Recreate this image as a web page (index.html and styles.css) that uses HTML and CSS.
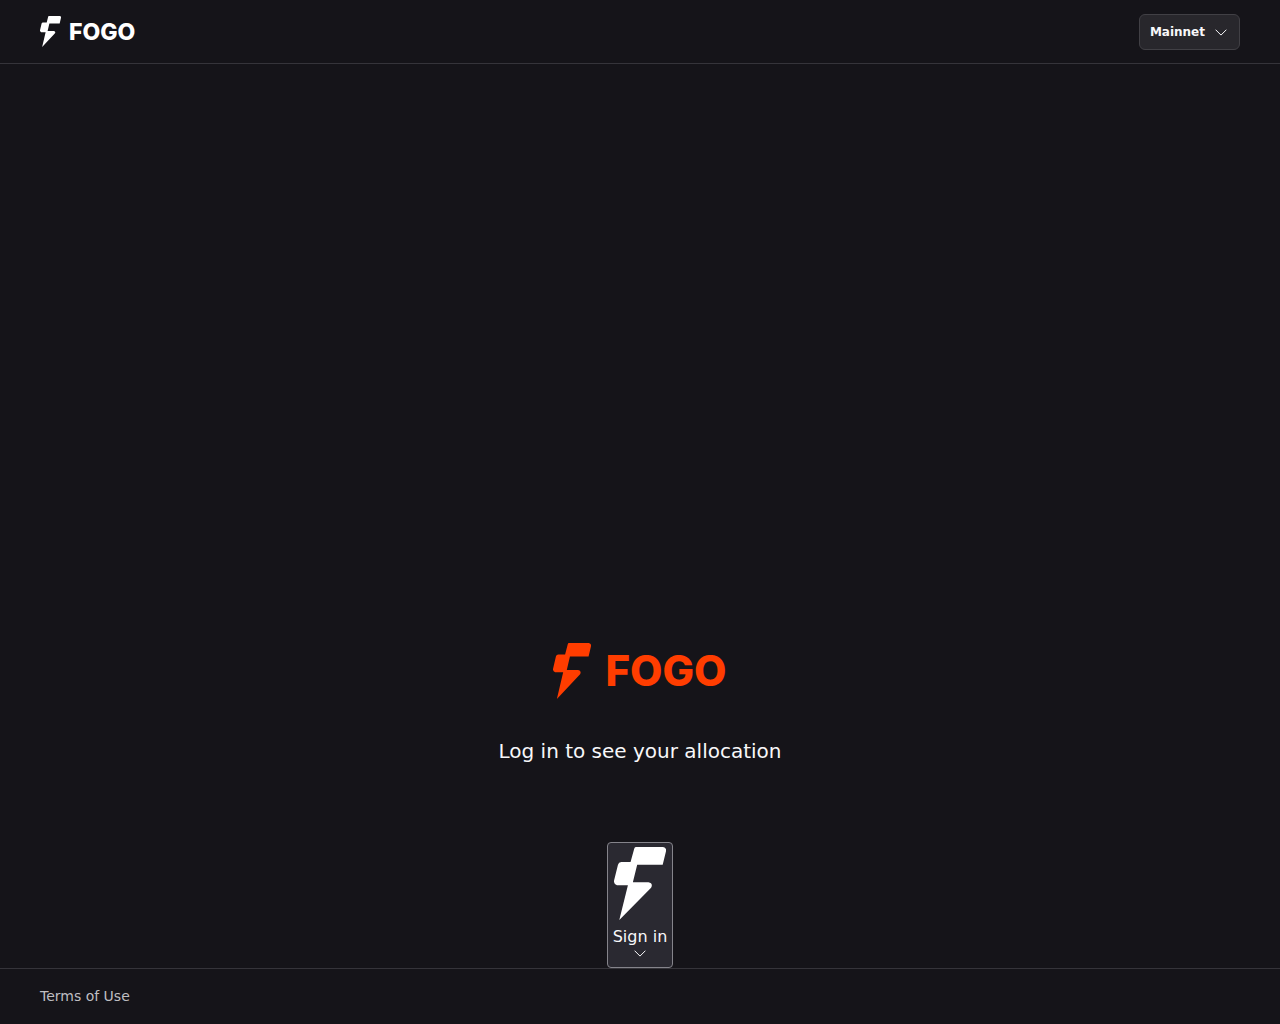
FILE: index.html
```html
<!DOCTYPE html>
<html lang="en">
<head>
<meta charset="utf-8">
<meta name="viewport" content="width=device-width, initial-scale=1">
<title>Fogo</title>
<link rel="stylesheet" href="styles.css">
</head>
<body>
<svg class="symbols" aria-hidden="true">
  <symbol id="bolt" viewBox="0 0 157 218" preserveAspectRatio="none">
    <path d="M66 0H148Q159 2 157 13L147 53H70L57 105H104Q119 108 112 122L16 218L42 114H9Q-1 111 0 101L12 53Q14 45 22 45H50L61 5Q62 0 66 0Z"/>
  </symbol>
  <symbol id="chevron" viewBox="0 0 12 8">
    <path d="M.6 1.7L6 7.1L11.4 1.7" fill="none" stroke="currentColor"/>
  </symbol>
</svg>
<header class="header">
  <a class="logo" href="#">
    <svg class="logo-mark" aria-hidden="true"><use href="#bolt"/></svg>
    <span>FOGO</span>
  </a>
  <button class="network" type="button">Mainnet
    <svg class="chevron" aria-hidden="true"><use href="#chevron"/></svg>
  </button>
</header>
<main class="main">
  <div class="logo logo-large">
    <svg class="logo-mark" aria-hidden="true"><use href="#bolt"/></svg>
    <span>FOGO</span>
  </div>
  <p class="prompt">Log in to see your allocation</p>
  <button class="sign-in" type="button">
    <svg class="sign-in-mark" aria-hidden="true"><use href="#bolt"/></svg>
    <span>Sign in</span>
    <svg class="chevron" aria-hidden="true"><use href="#chevron"/></svg>
  </button>
</main>
<footer class="footer"><a href="#">Terms of Use</a></footer>
</body>
</html>
```

FILE: styles.css
```css
* { box-sizing: border-box; }
body {
  margin: 0;
  min-height: 100vh;
  display: flex;
  flex-direction: column;
  background: #151419;
  color: #f8f8fa;
  font-family: "DejaVu Sans", sans-serif;
}
svg { display: block; fill: currentColor; flex: none; }
.symbols { display: none; }
a { color: inherit; text-decoration: none; }
.header {
  height: 64px;
  padding: 0 40px;
  display: flex;
  align-items: center;
  justify-content: space-between;
  border-bottom: 1px solid #35343a;
}
.logo {
  display: flex;
  align-items: center;
  gap: 8px;
  color: #fff;
  font: 800 23px/30px Inter, sans-serif;
}
.logo-mark { width: 21px; height: 31px; }
.logo-large {
  gap: 14px;
  color: #ff3d00;
  font-size: 42px;
  line-height: 54px;
}
.logo-large .logo-mark { width: 38px; height: 56px; }
.network {
  height: 36px;
  padding: 0 12px 0 10px;
  display: flex;
  align-items: center;
  gap: 10px;
  border: 1px solid #414045;
  border-radius: 6px;
  background: #28272c;
  color: #f8f8fa;
  font: 700 12px/20px "DejaVu Sans", sans-serif;
}
.chevron { width: 12px; height: 8px; }
.main {
  flex: 1;
  display: flex;
  flex-direction: column;
  align-items: center;
  justify-content: flex-end;
}
.prompt {
  margin: 38px 0 77px;
  font-size: 20px;
  line-height: 28px;
}
.sign-in {
  padding: 4px 5px 10px;
  display: flex;
  flex-direction: column;
  align-items: center;
  border: 1px solid #85848b;
  border-radius: 4px;
  background: #2a2931;
  color: #f8f8fa;
  font: 16px/24px "DejaVu Sans", sans-serif;
}
.sign-in-mark { width: 52px; height: 73px; margin-bottom: 5px; color: #fff; }
.footer {
  padding: 17px 40px 18px;
  border-top: 1px solid #35343a;
  color: #bfbec2;
  font-size: 14px;
  line-height: 20px;
}
```
